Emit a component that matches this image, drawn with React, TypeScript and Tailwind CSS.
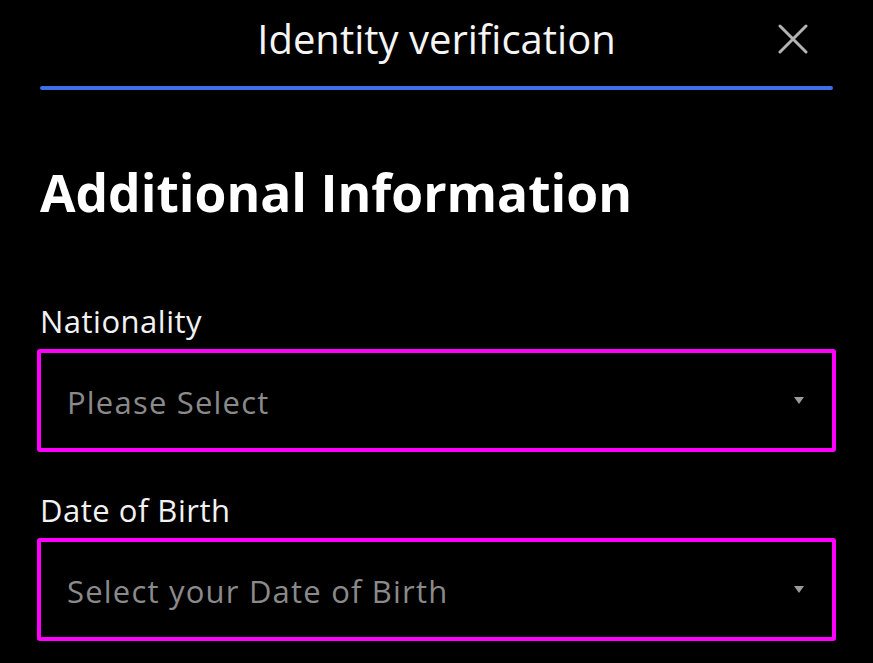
function Field({ label, placeholder }: { label: string; placeholder: string }) {
  return (
    <div className="flex flex-col">
      <div className="pl-[3px] text-[31px] leading-[40px] tracking-[0.5px] text-[#f2f2f2]">{label}</div>
      <button className="mt-[8px] flex h-[103px] w-full items-center justify-between rounded-[3px] border-[4px] border-[#ff00ff] pl-[26px] pr-[27px] text-left">
        <span className="pt-[3px] text-[31px] tracking-[1.2px] text-[#8a8a8a]">{placeholder}</span>
        <svg width="12" height="9" viewBox="0 0 12 9" className="text-[#9a9a9a]">
          <path d="M1 1h10L6 8z" fill="currentColor" />
        </svg>
      </button>
    </div>
  );
}

export default function App() {
  return (
    <div
      className="min-h-[663px] w-[873px] bg-black px-[37px]"
      style={{ fontFamily: '"Open Sans", "Noto Sans", sans-serif' }}
    >
      <div className="grid h-[78px] grid-cols-[1fr_auto_1fr] items-center">
        <div />
        <h2 className="text-[40px] font-medium text-[#f5f5f5]">Identity verification</h2>
        <div className="flex justify-end pr-[28px]">
          <svg width="30" height="30" viewBox="0 0 30 30" className="text-[#b3b3b3]">
            <path d="M2 2l26 26M28 2L2 28" stroke="currentColor" strokeWidth="3" strokeLinecap="round" />
          </svg>
        </div>
      </div>
      <div className="mx-[3px] mt-[8px] h-[4px] rounded-full bg-[#3b70e8]" />
      <h1 className="mt-[74px] pl-[3px] text-[51.5px] font-bold leading-[56px] text-white">
        Additional Information
      </h1>
      <div className="mt-[81px] flex flex-col gap-[38px]">
        <Field label="Nationality" placeholder="Please Select" />
        <Field label="Date of Birth" placeholder="Select your Date of Birth" />
      </div>
    </div>
  );
}
